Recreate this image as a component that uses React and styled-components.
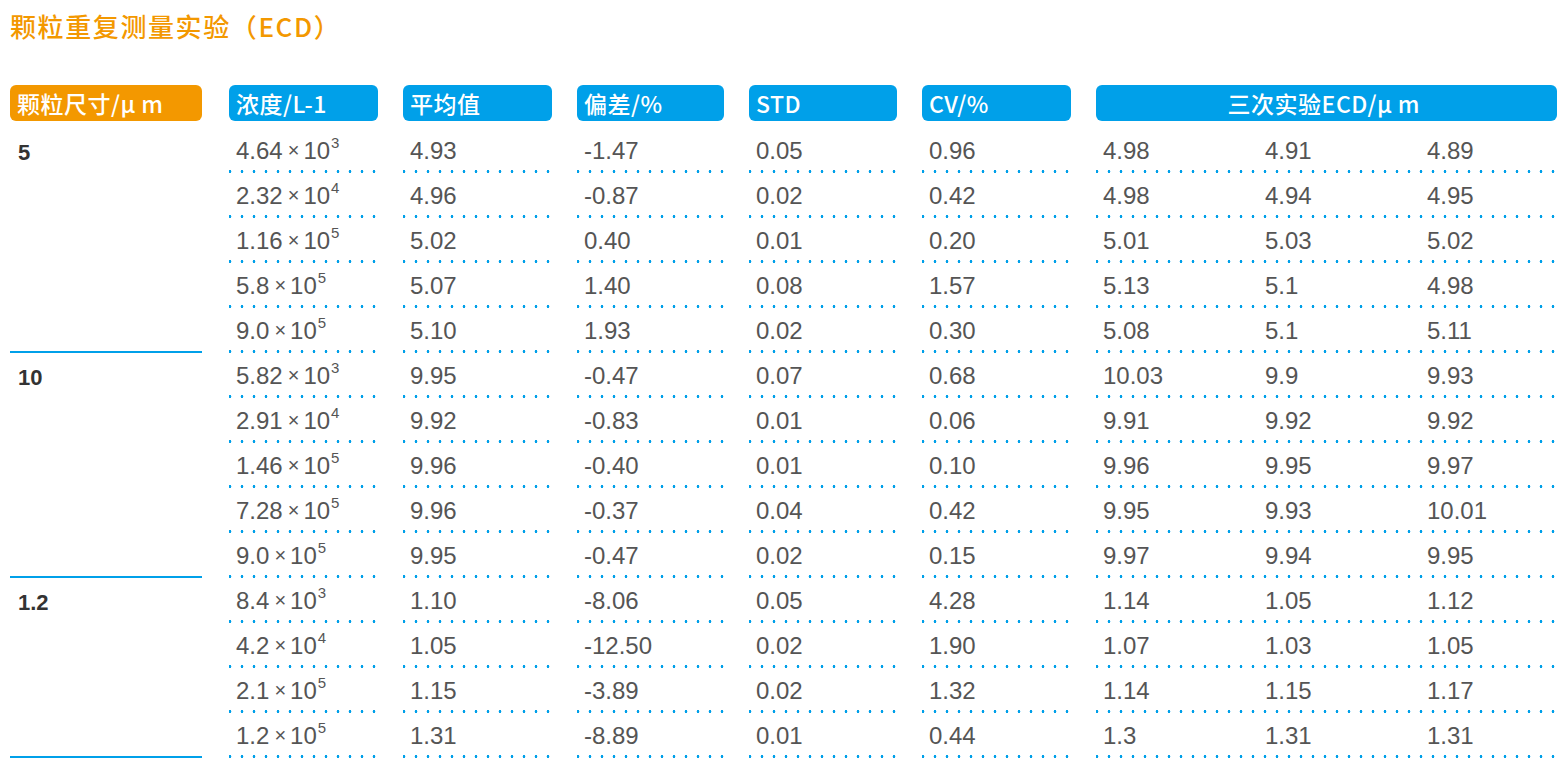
import React from "react";
import styled, { createGlobalStyle } from "styled-components";

const GlobalStyle = createGlobalStyle`
  body {
    margin: 0;
    background: #fff;
    font-family: "Liberation Sans", "Noto Sans CJK SC", sans-serif;
  }
`;

const ORANGE = "#f39800";
const BLUE = "#00a0e9";

const Page = styled.div`
  width: 1564px;
  padding: 10px 7px 0 10px;
  box-sizing: border-box;
`;

const Title = styled.h1`
  margin: 0;
  font-size: 26px;
  line-height: 32px;
  font-weight: 500;
  letter-spacing: 1.6px;
  color: ${ORANGE};
  font-family: "Noto Sans CJK SC", "Liberation Sans", sans-serif;
`;

const Table = styled.div`
  display: grid;
  grid-template-columns: 194px 149px 149px 147px 148px 149px 1fr;
  column-gap: 25px;
  margin-top: 43px;
`;

const HeadCell = styled.div`
  height: 36px;
  box-sizing: border-box;
  border-radius: 6px;
  background: ${(p) => (p.$orange ? ORANGE : BLUE)};
  width: ${(p) => (p.$orange ? "192px" : "auto")};
  color: #fff;
  font-size: 23px;
  font-weight: 500;
  display: flex;
  align-items: center;
  justify-content: ${(p) => (p.$center ? "center" : "flex-start")};
  padding: 0 0 0 ${(p) => (p.$center ? "0" : "7px")};
  margin-bottom: 7px;
  font-family: "Noto Sans CJK SC", "Liberation Sans", sans-serif;
  letter-spacing: 0.5px;
`;

const Unit = styled.span`
  letter-spacing: 6px;
`;

const GroupCell = styled.div`
  grid-column: 1;
  grid-row: span ${(p) => p.$span};
  width: 192px;
  border-bottom: 2px solid ${BLUE};
  box-sizing: border-box;
  padding: 12px 0 0 8px;
  font-size: 22px;
  font-weight: 700;
  color: #333;
`;

const Cell = styled.div`
  height: 45px;
  box-sizing: border-box;
  padding: 0 0 0 7px;
  display: flex;
  align-items: center;
  font-size: 24px;
  color: #555;
  white-space: nowrap;
  background-image: radial-gradient(circle, ${BLUE} 1.2px, transparent 1.6px);
  background-size: 12px 3px;
  background-repeat: repeat-x;
  background-position: -5px bottom;
`;

const Triple = styled(Cell)`
  display: grid;
  grid-template-columns: 162px 162px 1fr;
  align-items: center;
`;

const Times = styled.span`
  font-size: 20px;
  margin: 0 4px 0 5px;
`;

const Sup = styled.sup`
  font-size: 15px;
  vertical-align: baseline;
  position: relative;
  top: -8px;
  margin-left: 1px;
  line-height: 0;
`;

const groups = [
  {
    size: "5",
    rows: [
      ["4.64", "3", "4.93", "-1.47", "0.05", "0.96", "4.98", "4.91", "4.89"],
      ["2.32", "4", "4.96", "-0.87", "0.02", "0.42", "4.98", "4.94", "4.95"],
      ["1.16", "5", "5.02", "0.40", "0.01", "0.20", "5.01", "5.03", "5.02"],
      ["5.8", "5", "5.07", "1.40", "0.08", "1.57", "5.13", "5.1", "4.98"],
      ["9.0", "5", "5.10", "1.93", "0.02", "0.30", "5.08", "5.1", "5.11"],
    ],
  },
  {
    size: "10",
    rows: [
      ["5.82", "3", "9.95", "-0.47", "0.07", "0.68", "10.03", "9.9", "9.93"],
      ["2.91", "4", "9.92", "-0.83", "0.01", "0.06", "9.91", "9.92", "9.92"],
      ["1.46", "5", "9.96", "-0.40", "0.01", "0.10", "9.96", "9.95", "9.97"],
      ["7.28", "5", "9.96", "-0.37", "0.04", "0.42", "9.95", "9.93", "10.01"],
      ["9.0", "5", "9.95", "-0.47", "0.02", "0.15", "9.97", "9.94", "9.95"],
    ],
  },
  {
    size: "1.2",
    rows: [
      ["8.4", "3", "1.10", "-8.06", "0.05", "4.28", "1.14", "1.05", "1.12"],
      ["4.2", "4", "1.05", "-12.50", "0.02", "1.90", "1.07", "1.03", "1.05"],
      ["2.1", "5", "1.15", "-3.89", "0.02", "1.32", "1.14", "1.15", "1.17"],
      ["1.2", "5", "1.31", "-8.89", "0.01", "0.44", "1.3", "1.31", "1.31"],
    ],
  },
];

const headers = ["浓度/L-1", "平均值", "偏差/%", "STD", "CV/%"];

export default function App() {
  return (
    <Page>
      <GlobalStyle />
      <Title>颗粒重复测量实验（ECD）</Title>
      <Table>
        <HeadCell $orange>
          颗粒尺寸/<Unit>μm</Unit>
        </HeadCell>
        {headers.map((h) => (
          <HeadCell key={h}>{h}</HeadCell>
        ))}
        <HeadCell $center>
          三次实验ECD/<Unit>μm</Unit>
        </HeadCell>
        {groups.map((g) => (
          <React.Fragment key={g.size}>
            <GroupCell $span={g.rows.length}>{g.size}</GroupCell>
            {g.rows.map((r, i) => (
              <React.Fragment key={i}>
                <Cell>
                  {r[0]}
                  <Times>×</Times>10<Sup>{r[1]}</Sup>
                </Cell>
                <Cell>{r[2]}</Cell>
                <Cell>{r[3]}</Cell>
                <Cell>{r[4]}</Cell>
                <Cell>{r[5]}</Cell>
                <Triple>
                  <span>{r[6]}</span>
                  <span>{r[7]}</span>
                  <span>{r[8]}</span>
                </Triple>
              </React.Fragment>
            ))}
          </React.Fragment>
        ))}
      </Table>
    </Page>
  );
}
